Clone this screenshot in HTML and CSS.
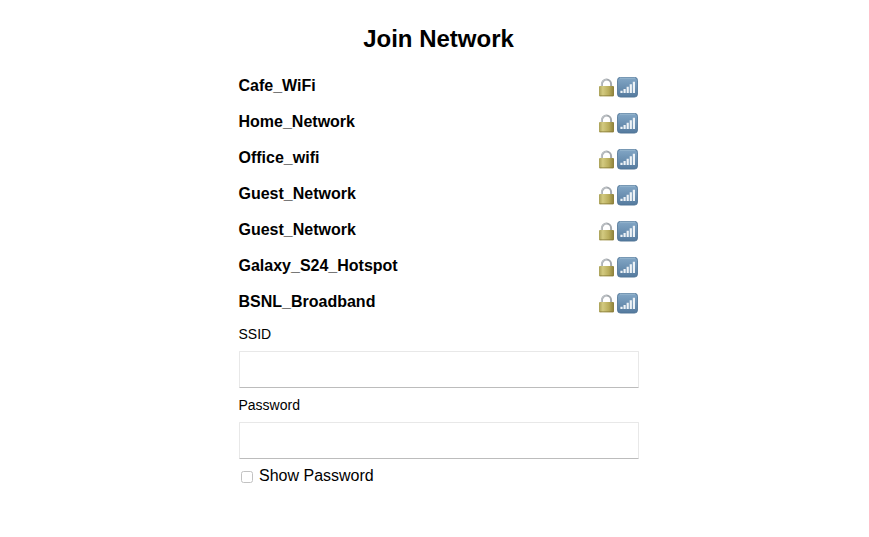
FILE: index.html
```html
<!DOCTYPE html>
<html lang="en">
<head>
<meta charset="utf-8">
<title>Join Network</title>
<link rel="stylesheet" href="styles.css">
</head>
<body>
<svg class="defs" aria-hidden="true">
  <defs>
    <linearGradient id="brass" x1="0" x2="1" y1="0" y2="0">
      <stop offset="0" stop-color="#aaa158"/><stop offset=".25" stop-color="#d3ca80"/><stop offset=".65" stop-color="#b9ad5c"/><stop offset="1" stop-color="#8b7e3a"/>
    </linearGradient>
    <linearGradient id="blue" x1="0" x2="0" y1="0" y2="1">
      <stop offset="0" stop-color="#83a7c6"/><stop offset="1" stop-color="#547a9e"/>
    </linearGradient>
    <symbol id="lock" viewBox="0 0 20 22">
      <path d="M4.9 10V7.2a4.6 4.6 0 0 1 9.2 0V10" fill="none" stroke="#a3a8ad" stroke-width="2"/>
      <path d="M4.7 9V7.2a4.7 4.7 0 0 1 5-4.6" fill="none" stroke="#d3d7da" stroke-width=".7"/>
      <rect x="2" y="9" width="15" height="10.3" rx="1" fill="url(#brass)"/>
      <path d="M2.6 18.8h13.8" stroke="#837634" stroke-width=".7"/>
    </symbol>
    <symbol id="signal" viewBox="0 0 21 21">
      <rect x=".5" y=".3" width="20" height="19.8" rx="3" fill="url(#blue)" stroke="#4c7193" stroke-width=".8"/>
      <path d="M3 1.2h15" stroke="#9dbbd2" stroke-width=".8"/>
      <path d="M4.5 13.7V16M7.6 12v4M10.7 9.8V16M13.8 7.3V16M16.9 4.7V16" stroke="#eef3f7" stroke-width="2.2"/>
    </symbol>
  </defs>
</svg>
<main class="panel">
  <h1>Join Network</h1>
  <ul class="networks">
    <li><span>Cafe_WiFi</span><span class="icons"><svg class="lock"><use href="#lock"/></svg><svg class="signal"><use href="#signal"/></svg></span></li>
    <li><span>Home_Network</span><span class="icons"><svg class="lock"><use href="#lock"/></svg><svg class="signal"><use href="#signal"/></svg></span></li>
    <li><span>Office_wifi</span><span class="icons"><svg class="lock"><use href="#lock"/></svg><svg class="signal"><use href="#signal"/></svg></span></li>
    <li><span>Guest_Network</span><span class="icons"><svg class="lock"><use href="#lock"/></svg><svg class="signal"><use href="#signal"/></svg></span></li>
    <li><span>Guest_Network</span><span class="icons"><svg class="lock"><use href="#lock"/></svg><svg class="signal"><use href="#signal"/></svg></span></li>
    <li><span>Galaxy_S24_Hotspot</span><span class="icons"><svg class="lock"><use href="#lock"/></svg><svg class="signal"><use href="#signal"/></svg></span></li>
    <li><span>BSNL_Broadband</span><span class="icons"><svg class="lock"><use href="#lock"/></svg><svg class="signal"><use href="#signal"/></svg></span></li>
  </ul>
  <form>
    <label class="field-label" for="ssid">SSID</label>
    <input class="field" id="ssid" type="text">
    <label class="field-label" for="password">Password</label>
    <input class="field" id="password" type="password">
    <label class="show"><input class="check" type="checkbox">Show Password</label>
  </form>
</main>
</body>
</html>
```
FILE: styles.css
```css
* { box-sizing: border-box; }
body { margin: 0; background: #fff; color: #000; font: 16px "Liberation Sans", Arial, sans-serif; }
.defs { display: block; width: 0; height: 0; }
.panel { width: 400px; margin-left: 238.5px; padding-top: 24px; }
h1 { margin: 0; height: 44px; font-size: 24px; line-height: 30px; text-align: center; }
.networks { margin: 0; padding: 0; list-style: none; font-weight: bold; }
.networks li { display: flex; justify-content: space-between; height: 36px; line-height: 36px; }
.icons { display: flex; padding: 9px .5px 0 0; }
.lock { width: 20px; height: 22px; }
.signal { width: 21px; height: 21px; }
.field-label { display: block; height: 31px; font-size: 14px; line-height: 28px; }
.field { display: block; width: 400px; height: 37px; margin: 0 0 3px; padding: 8px; border: 1px solid #e8e8e8; border-bottom-color: #bcbcbc; border-radius: 1px; outline: 0; background: #fff; font: inherit; }
.show { display: flex; align-items: center; height: 28px; }
.check { appearance: none; width: 12px; height: 12px; margin: 2px 6px 0 2.5px; border: 1px solid #c2c2c2; border-radius: 2.5px; background: #fff; }
```
